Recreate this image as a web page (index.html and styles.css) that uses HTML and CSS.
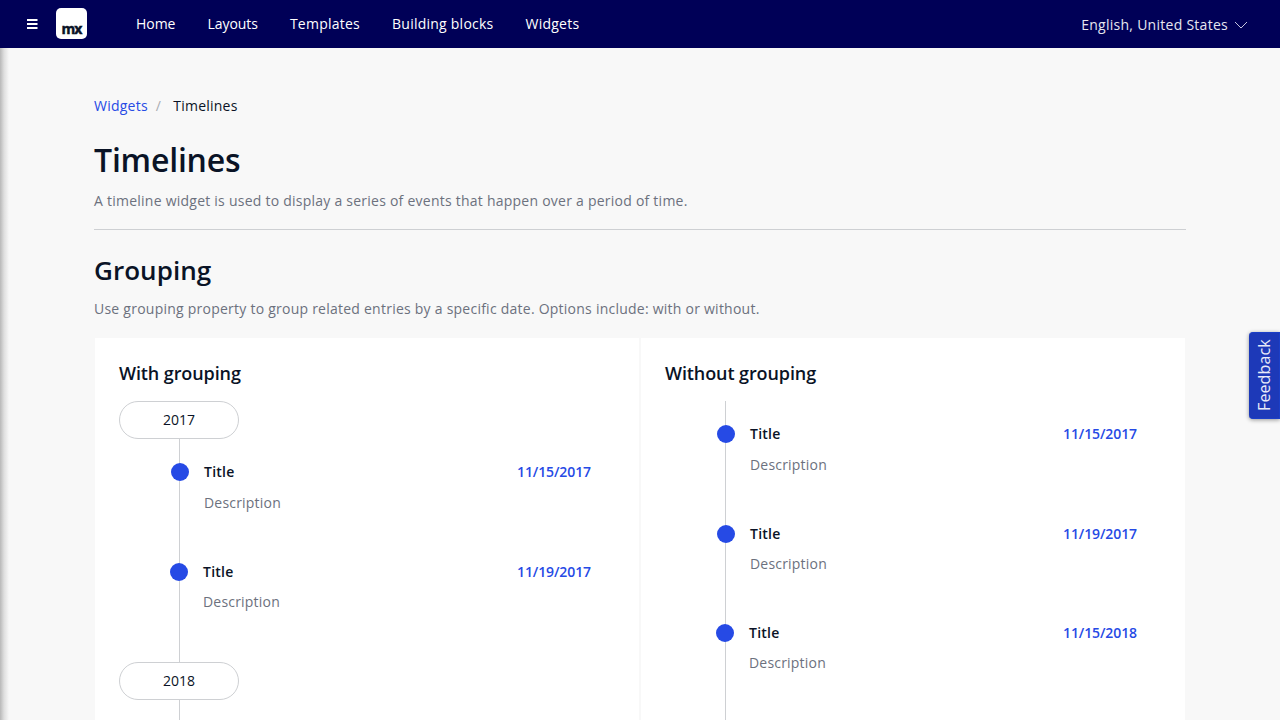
FILE: index.html
```html
<!DOCTYPE html>
<html lang="en">
<head>
<meta charset="utf-8">
<title>Timelines</title>
<link rel="stylesheet" href="styles.css">
</head>
<body>
<header class="topbar">
  <svg class="menu-icon" width="12" height="12" viewBox="0 0 12 12"><path d="M1 2h10.5M1 6h10.5M1 10h10.5" stroke="#fff" stroke-width="1.8"/></svg>
  <div class="logo"><span class="logo-text">mx</span></div>
  <nav class="nav"><a class="tight">Home</a><a class="tight">Layouts</a><a>Templates</a><a>Building blocks</a><a>Widgets</a></nav>
  <div class="language"><span>English, United States</span><svg width="14" height="8" viewBox="0 0 14 8"><path d="M1 1l6 6 6-6" fill="none" stroke="#c5c5df" stroke-width="1"/></svg></div>
</header>
<main class="page">
  <div class="breadcrumb"><a class="crumb-link">Widgets</a><span class="crumb-sep">/</span><span>Timelines</span></div>
  <section class="intro">
    <h1 class="title">Timelines</h1>
    <p class="text">A timeline widget is used to display a series of events that happen over a period of time.</p>
  </section>
  <h2 class="subtitle">Grouping</h2>
  <p class="text">Use grouping property to group related entries by a specific date. Options include: with or without.</p>
  <div class="cards">
    <section class="card">
      <h3 class="card-title">With grouping</h3>
      <div class="pill">2017</div>
      <article class="entry entry-first"><i class="dot"></i><div class="body"><b>Title</b><p class="desc">Description</p></div><time>11/15/2017</time></article>
      <article class="entry entry-last"><i class="dot"></i><div class="body"><b>Title</b><p class="desc">Description</p></div><time>11/19/2017</time></article>
      <div class="pill">2018</div>
      <div class="stem"></div>
    </section>
    <section class="card">
      <h3 class="card-title">Without grouping</h3>
      <article class="entry entry-first"><i class="dot"></i><div class="body"><b>Title</b><p class="desc">Description</p></div><time>11/15/2017</time></article>
      <article class="entry entry-short"><i class="dot"></i><div class="body"><b>Title</b><p class="desc">Description</p></div><time>11/19/2017</time></article>
      <article class="entry entry-last"><i class="dot"></i><div class="body"><b>Title</b><p class="desc">Description</p></div><time>11/15/2018</time></article>
    </section>
  </div>
</main>
<div class="edge-shadow"></div>
<button class="feedback">Feedback</button>
</body>
</html>
```
FILE: styles.css
```css
* { box-sizing: border-box; }
html, body { height: 100%; }
body { display: flex; flex-direction: column; margin: 0; overflow: hidden; background: #f8f8f8; color: #0a1326; font: 14px/20px "Open Sans", sans-serif; letter-spacing: 0.24px; }
h1, h2, h3, p { margin: 0; }
.topbar { display: flex; flex: none; align-items: center; height: 48px; padding: 0 32px 0 26px; background: #000057; color: #fff; }
.menu-icon { display: block; }
.logo { display: flex; justify-content: center; align-items: flex-end; width: 31px; height: 31px; margin: 0 0 1px 18px; padding-bottom: 3px; border-radius: 5px; background: #fff; color: #0a1326; }
.logo-text { font-size: 14px; line-height: 15px; font-weight: 700; letter-spacing: -0.8px; -webkit-text-stroke: 0.5px #0a1326; }
.nav { display: flex; gap: 32px; margin-left: 49px; }
.tight { letter-spacing: -0.04px; }
.language { display: flex; align-items: center; gap: 6px; margin-left: auto; padding-top: 2px; color: #e6e6f0; letter-spacing: 0.27px; }
.page { display: flex; flex-direction: column; flex: 1; min-height: 0; padding: 48px 94px 0; }
.crumb-link { color: #264ae5; }
.crumb-sep { padding: 0 12px 0 8px; color: #a9acb3; }
.intro { margin-top: 23px; padding-bottom: 18px; border-bottom: 1px solid #ced0d3; }
.title { font-size: 32px; line-height: 42px; font-weight: 600; letter-spacing: -0.2px; }
.text { color: #6c717e; }
.title + .text { margin-top: 10px; }
.subtitle { margin-top: 24px; margin-bottom: 12px; font-size: 26px; line-height: 33px; font-weight: 600; letter-spacing: 0.05px; }
.cards { display: grid; flex: 1; min-height: 0; grid-template-columns: 1fr 1fr; gap: 2px; margin-top: 19px; padding: 0 1px; }
.card { padding: 24px 24px 0; background: #fff; }
.card-title { margin-bottom: 16px; font-size: 18px; line-height: 23px; font-weight: 600; letter-spacing: -0.1px; }
.pill { width: 120px; height: 38px; border: 1px solid #ced0d3; border-radius: 19px; line-height: 36px; text-align: center; letter-spacing: 0; }
.stem { width: 1px; height: 20px; margin-left: 60px; background: #ced0d3; }
.entry { display: flex; align-items: flex-start; height: 100px; padding: 24px 24px 0 52px; background: linear-gradient(#ced0d3, #ced0d3) 60px 0 / 1px 100% no-repeat; }
.entry-short { height: 99px; }
.entry-last { height: 123px; padding-left: 51px; }
.cards .entry-last:last-child { height: 120px; }
.dot { width: 18px; height: 18px; margin-right: 15px; border-radius: 50%; background: #264ae5; }
.body { flex: 1; margin-top: -1px; }
.body b, time { font-weight: 600; }
.desc { margin-top: 10px; color: #6c717e; letter-spacing: 0.2px; }
.entry-first .desc { margin-top: 11px; }
time { margin-top: -1px; color: #264ae5; letter-spacing: -0.1px; }
.edge-shadow { position: absolute; top: 48px; bottom: 0; left: 0; width: 9px; background: linear-gradient(90deg, rgba(0,0,0,.26), rgba(0,0,0,.1) 45%, rgba(0,0,0,0)); }
.feedback { position: absolute; top: 332px; right: 0; width: 31px; height: 87px; padding: 0; border: 1px solid #1b3fc8; border-right: 0; border-radius: 0 4px 4px 0; background: #1d39b8; box-shadow: 0 -1px 4px rgba(0,0,0,.4); color: #e8ebf8; font: 16px/29px "Open Sans", sans-serif; letter-spacing: 0.12px; writing-mode: vertical-rl; transform: rotate(180deg); }
```
